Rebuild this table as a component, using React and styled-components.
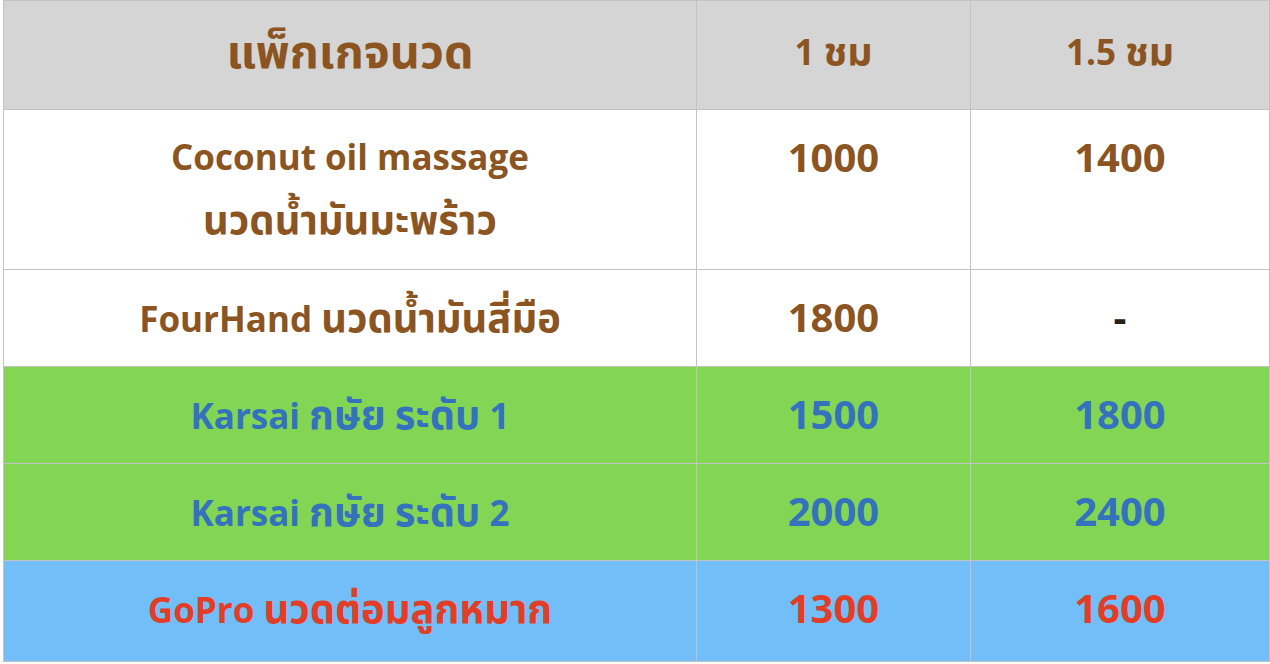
import React from "react";
import styled, { createGlobalStyle } from "styled-components";

const Global = createGlobalStyle`
  html, body { margin: 0; padding: 0; background: #ffffff; }
  body {
    font-family: "Open Sans", "Noto Sans Thai", "Noto Sans Thai Looped", "Noto Sans", "DejaVu Sans", sans-serif;
  }
`;

const Table = styled.table`
  margin: 0 0 0 3px;
  width: 1266px;
  border-collapse: collapse;
  table-layout: fixed;
  font-weight: 700;
`;

const Row = styled.tr`
  height: ${(p) => p.$h}px;
  background: ${(p) => p.$bg};
  color: ${(p) => p.$fg};
`;

const HeadCell = styled.th`
  border: 1px solid #c3c3c3;
  background: #d5d5d5;
  color: #8b5420;
  font-size: ${(p) => p.$size}px;
  font-weight: 700;
  text-align: center;
  vertical-align: middle;
  padding: 0 0 4px;
`;

const Cell = styled.td`
  border: 1px solid #c3c3c3;
  font-size: ${(p) => (p.$num ? 40 : 35)}px;
  line-height: 62px;
  text-align: center;
  vertical-align: top;
  padding: 16px 0 0;
`;

const Thai = styled.span`
  font-size: ${(p) => p.$scale || 1.14}em;
`;

const Dash = styled.span`
  color: #2a2016;
`;

const BROWN = "#8b5420";
const BLUE = "#3572be";
const RED = "#e23d26";
const GREEN = "#82d653";
const SKY = "#72bef8";

function Mixed({ text, scale }) {
  const parts = text.split(/([\u0E00-\u0E7F]+)/);
  return parts.map((p, i) =>
    /[\u0E00-\u0E7F]/.test(p) ? (
      <Thai key={i} $scale={scale}>
        {p}
      </Thai>
    ) : (
      <React.Fragment key={i}>{p}</React.Fragment>
    )
  );
}

const rows = [
  { name: ["Coconut oil massage", "นวดน้ำมันมะพร้าว"], a: "1000", b: "1400", h: 160, bg: "#ffffff", fg: BROWN },
  { name: ["FourHand นวดน้ำมันสี่มือ"], a: "1800", b: "-", h: 97, bg: "#ffffff", fg: BROWN },
  { name: ["Karsai กษัย ระดับ 1"], a: "1500", b: "1800", h: 97, bg: GREEN, fg: BLUE },
  { name: ["Karsai กษัย ระดับ 2"], a: "2000", b: "2400", h: 97, bg: GREEN, fg: BLUE },
  { name: ["GoPro นวดต่อมลูกหมาก"], a: "1300", b: "1600", h: 101, bg: SKY, fg: RED },
];

export default function App() {
  return (
    <>
      <Global />
      <Table>
        <colgroup>
          <col style={{ width: 693 }} />
          <col style={{ width: 274 }} />
          <col style={{ width: 299 }} />
        </colgroup>
        <thead>
          <Row $h={109}>
            <HeadCell $size={42}>
              <Mixed text="แพ็กเกจนวด" scale={1.11} />
            </HeadCell>
            <HeadCell $size={35}>
              <Mixed text="1 ชม" scale={1.12} />
            </HeadCell>
            <HeadCell $size={35}>
              <Mixed text="1.5 ชม" scale={1.12} />
            </HeadCell>
          </Row>
        </thead>
        <tbody>
          {rows.map((r, i) => (
            <Row key={i} $h={r.h} $bg={r.bg} $fg={r.fg}>
              <Cell>
                {r.name.map((line, j) => (
                  <div key={j}>
                    <Mixed text={line} />
                  </div>
                ))}
              </Cell>
              <Cell $num>{r.a}</Cell>
              <Cell $num>{r.b === "-" ? <Dash>-</Dash> : r.b}</Cell>
            </Row>
          ))}
        </tbody>
      </Table>
    </>
  );
}
